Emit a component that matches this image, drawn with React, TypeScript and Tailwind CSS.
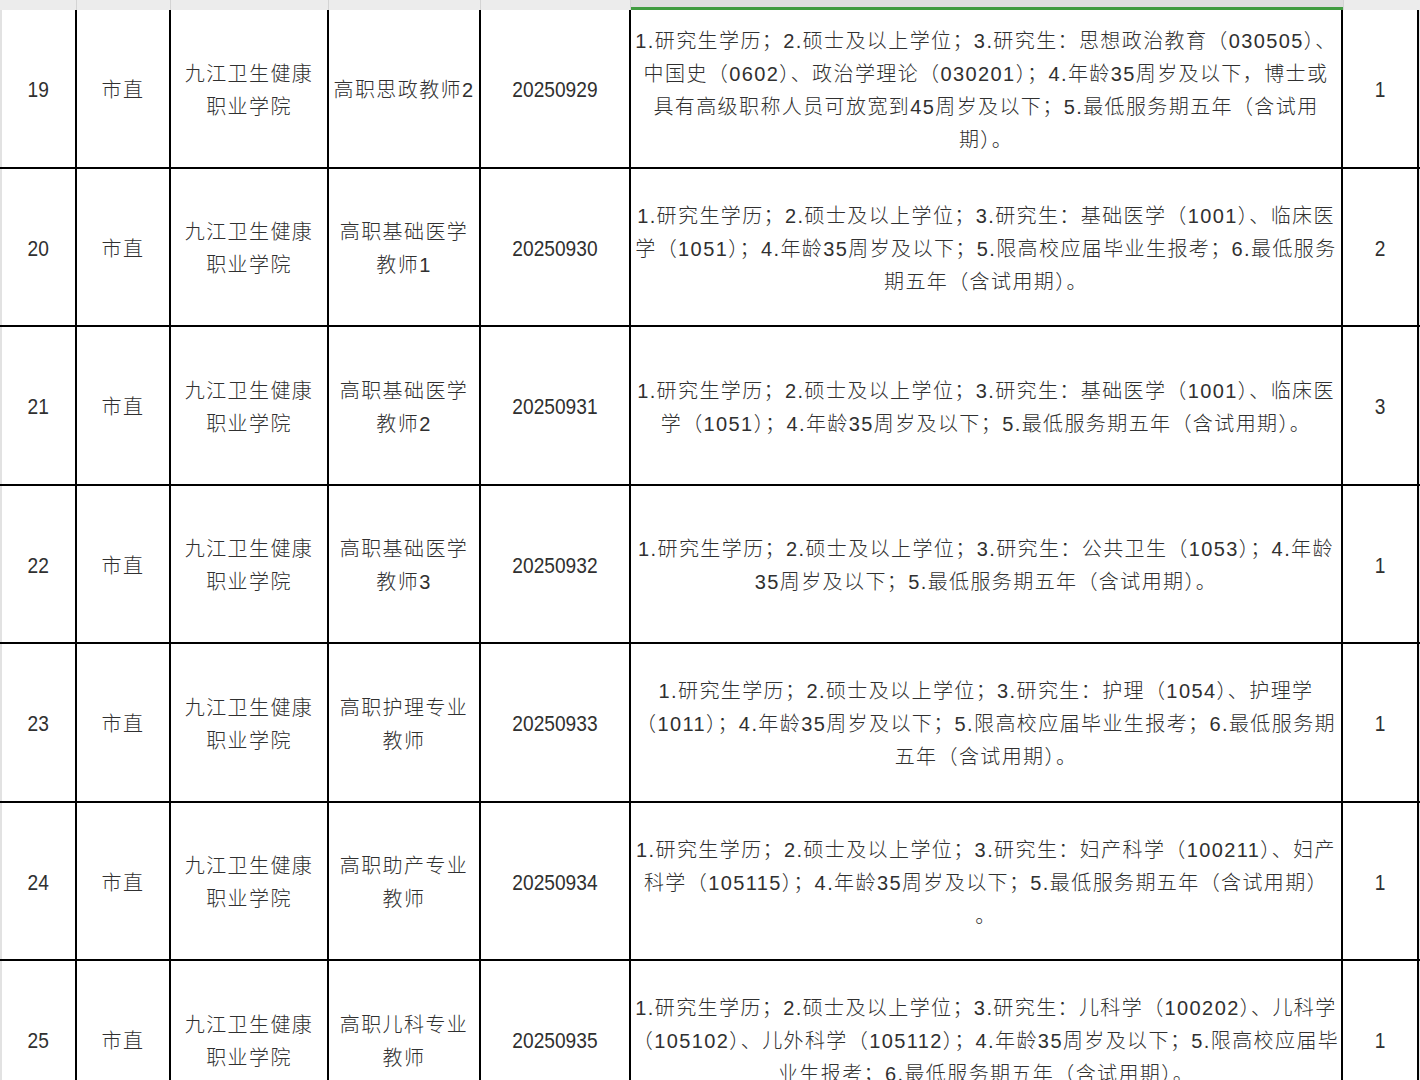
import React from "react";

type Row = {
  no: string;
  unit: string;
  org: string[];
  post: string[];
  code: string;
  req: string[];
  count: string;
  h: string;
};

const ORG = ["九江卫生健康", "职业学院"];

const ROWS: Row[] = [
  {
    no: "19",
    unit: "市直",
    org: ORG,
    post: ["高职思政教师2"],
    code: "20250929",
    req: [
      "1.研究生学历；2.硕士及以上学位；3.研究生：思想政治教育（030505）、",
      "中国史（0602）、政治学理论（030201）；4.年龄35周岁及以下，博士或",
      "具有高级职称人员可放宽到45周岁及以下；5.最低服务期五年（含试用",
      "期）。",
    ],
    count: "1",
    h: "h-[159px]",
  },
  {
    no: "20",
    unit: "市直",
    org: ORG,
    post: ["高职基础医学", "教师1"],
    code: "20250930",
    req: [
      "1.研究生学历；2.硕士及以上学位；3.研究生：基础医学（1001）、临床医",
      "学（1051）；4.年龄35周岁及以下；5.限高校应届毕业生报考；6.最低服务",
      "期五年（含试用期）。",
    ],
    count: "2",
    h: "h-[158px]",
  },
  {
    no: "21",
    unit: "市直",
    org: ORG,
    post: ["高职基础医学", "教师2"],
    code: "20250931",
    req: [
      "1.研究生学历；2.硕士及以上学位；3.研究生：基础医学（1001）、临床医",
      "学（1051）；4.年龄35周岁及以下；5.最低服务期五年（含试用期）。",
    ],
    count: "3",
    h: "h-[159px]",
  },
  {
    no: "22",
    unit: "市直",
    org: ORG,
    post: ["高职基础医学", "教师3"],
    code: "20250932",
    req: [
      "1.研究生学历；2.硕士及以上学位；3.研究生：公共卫生（1053）；4.年龄",
      "35周岁及以下；5.最低服务期五年（含试用期）。",
    ],
    count: "1",
    h: "h-[158px]",
  },
  {
    no: "23",
    unit: "市直",
    org: ORG,
    post: ["高职护理专业", "教师"],
    code: "20250933",
    req: [
      "1.研究生学历；2.硕士及以上学位；3.研究生：护理（1054）、护理学",
      "（1011）；4.年龄35周岁及以下；5.限高校应届毕业生报考；6.最低服务期",
      "五年（含试用期）。",
    ],
    count: "1",
    h: "h-[159px]",
  },
  {
    no: "24",
    unit: "市直",
    org: ORG,
    post: ["高职助产专业", "教师"],
    code: "20250934",
    req: [
      "1.研究生学历；2.硕士及以上学位；3.研究生：妇产科学（100211）、妇产",
      "科学（105115）；4.年龄35周岁及以下；5.最低服务期五年（含试用期）",
      "。",
    ],
    count: "1",
    h: "h-[158px]",
  },
  {
    no: "25",
    unit: "市直",
    org: ORG,
    post: ["高职儿科专业", "教师"],
    code: "20250935",
    req: [
      "1.研究生学历；2.硕士及以上学位；3.研究生：儿科学（100202）、儿科学",
      "（105102）、儿外科学（105112）；4.年龄35周岁及以下；5.限高校应届毕",
      "业生报考；6.最低服务期五年（含试用期）。",
    ],
    count: "1",
    h: "h-[159px]",
  },
];

const cjk =
  "font-['Liberation_Sans','Noto_Sans_CJK_SC',sans-serif] font-light text-[20px] tracking-[1.4px]";
const cell = "flex shrink-0 items-center justify-center border-r-2 border-black";

function Lines({ lines }: { lines: string[] }) {
  return (
    <div className={`${cjk} flex flex-col items-center pt-[4px] leading-[33px] whitespace-nowrap`}>
      {lines.map((l, i) => (
        <span key={i}>{l}</span>
      ))}
    </div>
  );
}

// digits in the sheet are condensed, so squeeze them a bit
function Num({ v }: { v: string }) {
  return (
    <span className="inline-block scale-x-[0.87] pt-[2px] font-['Liberation_Sans',sans-serif] text-[22px]">
      {v}
    </span>
  );
}

export default function App() {
  return (
    <div className="h-[1080px] w-[1420px] overflow-hidden bg-white text-[#303030]">
      {/* column header strip */}
      <div className="flex h-[10px] bg-[#ececec]">
        <div className="w-[77px] shrink-0 border-r border-[#d4d4d4]" />
        <div className="w-[94px] shrink-0 border-r border-[#d4d4d4]" />
        <div className="w-[158px] shrink-0 border-r border-[#d4d4d4]" />
        <div className="w-[152px] shrink-0 border-r border-[#d4d4d4]" />
        <div className="w-[150px] shrink-0 border-r border-[#d4d4d4]" />
        <div className="flex w-[712px] shrink-0 flex-col justify-end bg-[#dedede]">
          <div className="h-[3px] bg-[#3f9b3f]" />
        </div>
        <div className="w-[76px] shrink-0 border-l border-[#d4d4d4]" />
      </div>

      {ROWS.map((r) => (
        <div key={r.no} className={`flex ${r.h} border-b-2 border-black`}>
          <div className={`${cell} w-[77px] border-l-2 border-l-[#e2e2e2]`}>
            <Num v={r.no} />
          </div>
          <div className={`${cell} w-[94px]`}>
            <Lines lines={[r.unit]} />
          </div>
          <div className={`${cell} w-[158px]`}>
            <Lines lines={r.org} />
          </div>
          <div className={`${cell} w-[152px]`}>
            <Lines lines={r.post} />
          </div>
          <div className={`${cell} w-[150px]`}>
            <Num v={r.code} />
          </div>
          <div className={`${cell} w-[712px]`}>
            <Lines lines={r.req} />
          </div>
          <div className={`${cell} w-[76px]`}>
            <Num v={r.count} />
          </div>
          <div className="w-[1px] shrink-0 bg-[#e8e8e8]" />
        </div>
      ))}
    </div>
  );
}
